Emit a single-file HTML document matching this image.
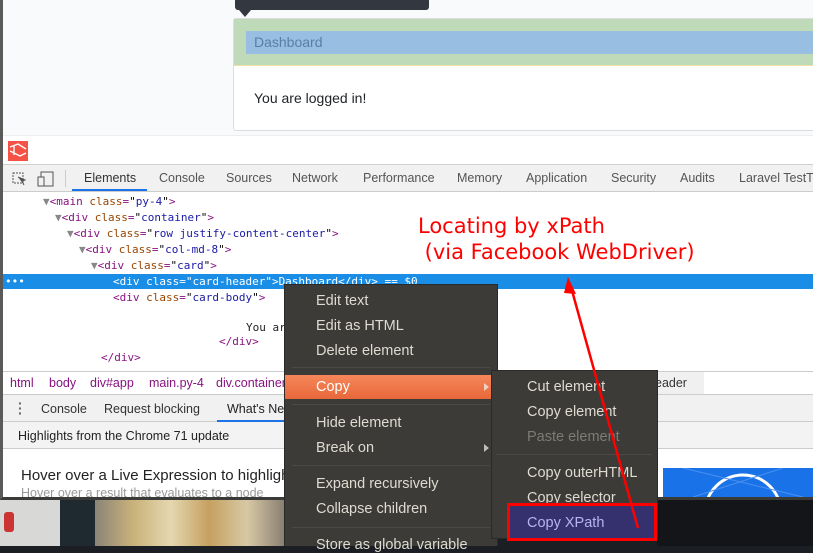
<!DOCTYPE html>
<html><head><meta charset="utf-8"><style>
*{margin:0;padding:0;box-sizing:border-box}
body{width:813px;height:546px;overflow:hidden;position:relative;background:#1b1f23;font-family:"Liberation Sans",sans-serif}
.a{position:absolute;white-space:nowrap}
.mono{font-family:"DejaVu Sans Mono","Liberation Mono",monospace;font-size:11px}
.tag{color:#881280}.at{color:#994500}.v{color:#1a1aa6}.g{color:#888}
.mi{position:absolute;color:#dfdbd2;font-size:14.5px;white-space:nowrap}
.sep{position:absolute;height:1px;background:#2e2d2a;border-bottom:1px solid #4a4945}
</style></head><body>
<div class="a" style="left:0;top:497px;width:60px;height:49px;background:#d8d8d6"></div>
<div class="a" style="left:4px;top:512px;width:10px;height:20px;background:#c33;border-radius:3px"></div>
<div class="a" style="left:60px;top:497px;width:35px;height:49px;background:#1f2a30"></div>
<div class="a" style="left:95px;top:497px;width:190px;height:49px;background:linear-gradient(90deg,#8a8478,#c9b27a 20%,#e4d7b0 40%,#c6a060 60%,#d7c9a5 80%,#887e70)"></div>
<div class="a" style="left:657px;top:497px;width:156px;height:49px;background:#131518"></div>
<div class="a" style="left:0;top:0;width:813px;height:500px;background:#fff;border-left:3px solid #5a5a58;border-bottom:3px solid #3a3a38"></div>
<div class="a" style="left:3px;top:0;width:810px;height:135px;background:#f8fafc"></div>
<div class="a" style="left:233px;top:18px;width:590px;height:113px;background:#fff;border:1px solid #dcdcdc;border-radius:3px"></div>
<div class="a" style="left:234px;top:19px;width:580px;height:47px;background:#bfdab8;border-bottom:1px solid #f0e0a8"></div>
<div class="a" style="left:246px;top:31px;width:567px;height:23px;background:#98bee2"></div>
<div class="a" style="left:254px;top:34px;font-size:14px;color:#5a7ea8">Dashboard</div>
<div class="a" style="left:254px;top:90px;font-size:14px;color:#212529">You are logged in!</div>
<div class="a" style="left:235px;top:0;width:194px;height:10px;background:#333740;border-radius:0 0 3px 3px"></div>
<div class="a" style="left:239px;top:10px;width:0;height:0;border-left:6px solid transparent;border-right:6px solid transparent;border-top:7px solid #333740"></div>
<div class="a" style="left:3px;top:135px;width:810px;height:30px;background:#fff;border-top:1px solid #eee;border-bottom:1px solid #d0d0d0"></div>
<div class="a" style="left:8px;top:141px;width:20px;height:20px;background:#f55247"></div>
<svg class="a" style="left:8px;top:141px" width="20" height="20"><path d="M2 6 L10 3 L18 8 M2 10 L12 15 L18 12 M6 4 L6 14" stroke="#fff" stroke-width="1.4" fill="none"/></svg>
<div class="a" style="left:3px;top:165px;width:810px;height:27px;background:#f1f1f1;border-bottom:1px solid #ccc"></div>
<svg class="a" style="left:12px;top:171px" width="45" height="16"><rect x="1" y="2" width="10" height="10" fill="none" stroke="#555" stroke-dasharray="2 1"/><path d="M6 6 L13 9 L10 10 L12 14" stroke="#555" fill="#555"/><rect x="29" y="1" width="12" height="14" fill="none" stroke="#555"/><rect x="26" y="6" width="6" height="9" fill="#f1f1f1" stroke="#555"/></svg>
<div class="a" style="left:65px;top:170px;width:1px;height:17px;background:#ccc"></div>
<div class="a" style="left:72px;top:189px;width:75px;height:2px;background:#1a73e8"></div>
<div class="a" style="top:171px;left:0;font-size:12.5px;color:#333;width:813px;height:16px">
<span class="a" style="left:84px">Elements</span><span class="a" style="left:159px;color:#555">Console</span><span class="a" style="left:226px;color:#555">Sources</span><span class="a" style="left:292px;color:#555">Network</span><span class="a" style="left:363px;color:#555">Performance</span><span class="a" style="left:457px;color:#555">Memory</span><span class="a" style="left:526px;color:#555">Application</span><span class="a" style="left:611px;color:#555">Security</span><span class="a" style="left:680px;color:#555">Audits</span><span class="a" style="left:739px;color:#555">Laravel TestTools</span></div>
<div class="a mono" style="left:43px;top:195px"><span class="g">▼</span><span class="tag">&lt;main</span> <span class="at">class</span><span class="tag">=</span>"<span class="v">py-4</span>"<span class="tag">&gt;</span></div>
<div class="a mono" style="left:55px;top:211px"><span class="g">▼</span><span class="tag">&lt;div</span> <span class="at">class</span><span class="tag">=</span>"<span class="v">container</span>"<span class="tag">&gt;</span></div>
<div class="a mono" style="left:67px;top:227px"><span class="g">▼</span><span class="tag">&lt;div</span> <span class="at">class</span><span class="tag">=</span>"<span class="v">row justify-content-center</span>"<span class="tag">&gt;</span></div>
<div class="a mono" style="left:79px;top:243px"><span class="g">▼</span><span class="tag">&lt;div</span> <span class="at">class</span><span class="tag">=</span>"<span class="v">col-md-8</span>"<span class="tag">&gt;</span></div>
<div class="a mono" style="left:91px;top:259px"><span class="g">▼</span><span class="tag">&lt;div</span> <span class="at">class</span><span class="tag">=</span>"<span class="v">card</span>"<span class="tag">&gt;</span></div>
<div class="a" style="left:3px;top:274px;width:810px;height:15px;background:#1a8ee6"></div>
<div class="a mono" style="left:5px;top:275px;color:#fff">•••</div>
<div class="a mono" style="left:113px;top:275px;color:#fff">&lt;div class="card-header"&gt;Dashboard&lt;/div&gt; == $0</div>
<div class="a mono" style="left:113px;top:291px"><span class="tag">&lt;div</span> <span class="at">class</span><span class="tag">=</span>"<span class="v">card-body</span>"<span class="tag">&gt;</span></div>
<div class="a mono" style="left:246px;top:321px;color:#222">You ar</div>
<div class="a mono" style="left:219px;top:335px" ><span class="tag">&lt;/div&gt;</span></div>
<div class="a mono" style="left:101px;top:351px"><span class="tag">&lt;/div&gt;</span></div>
<div class="a" style="left:3px;top:371px;width:810px;height:24px;background:#fff;border-top:1px solid #ccc;border-bottom:1px solid #ccc"></div>
<div class="a" style="left:640px;top:372px;width:64px;height:22px;background:#f0f0f0"></div>
<div class="a" style="top:376px;left:0;font-size:12.5px;color:#881280;width:813px;height:16px"><span class="a" style="left:10px">html</span><span class="a" style="left:49px">body</span><span class="a" style="left:90px">div#app</span><span class="a" style="left:149px">main.py-4</span><span class="a" style="left:216px">div.container</span><span class="a" style="left:655px;color:#333">eader</span></div>
<div class="a" style="left:3px;top:395px;width:810px;height:27px;background:#f1f1f1;border-bottom:1px solid #ccc"></div>
<div class="a" style="left:18px;top:401px;font-size:14px;color:#666;line-height:5px;font-weight:bold">·<br>·<br>·</div>
<div class="a" style="left:41px;top:402px;font-size:12.5px;color:#333">Console</div>
<div class="a" style="left:104px;top:402px;font-size:12.5px;color:#333">Request blocking</div>
<div class="a" style="left:227px;top:402px;font-size:12.5px;color:#222">What's New</div>
<div class="a" style="left:217px;top:420px;width:80px;height:2px;background:#1a73e8"></div>
<div class="a" style="left:3px;top:422px;width:810px;height:27px;background:#f3f3f3;border-bottom:1px solid #ccc"></div>
<div class="a" style="left:18px;top:429px;font-size:12.5px;color:#222">Highlights from the Chrome 71 update</div>
<div class="a" style="left:21px;top:467px;font-size:15px;color:#222">Hover over a Live Expression to highlight a DOM node</div>
<div class="a" style="left:21px;top:487px;font-size:12.5px;color:#999;height:10px;overflow:hidden;line-height:13px">Hover over a result that evaluates to a node</div>
<div class="a" style="left:663px;top:468px;width:150px;height:29px;background:#1a72e8;overflow:hidden"><svg width="150" height="29"><circle cx="80" cy="45" r="38" fill="none" stroke="#fff" stroke-width="3"/><path d="M20 0 L140 29 M30 29 L120 0" stroke="#4a90ef"/></svg></div>
<div class="a" style="left:418px;top:213px;font-family:'DejaVu Sans',sans-serif;font-size:21px;color:#f00;line-height:26px">Locating by xPath<br>&nbsp;(via Facebook WebDriver)</div>
<div class="a" style="left:284px;top:284px;width:214px;height:262px;background:#3c3b37;border:1px solid #2a2a28;border-bottom:none"></div>
<div class="mi" style="left:316px;top:293px">Edit text</div>
<div class="mi" style="left:316px;top:318px">Edit as HTML</div>
<div class="mi" style="left:316px;top:343px">Delete element</div>
<div class="sep" style="left:292px;top:367px;width:198px"></div>
<div class="a" style="left:285px;top:375px;width:210px;height:24px;background:linear-gradient(#f5875a,#e8683a)"></div>
<div class="mi" style="left:316px;top:379px;color:#fff">Copy</div>
<div class="a" style="left:484px;top:383px;border-left:5px solid #f0d0c0;border-top:4px solid transparent;border-bottom:4px solid transparent"></div>
<div class="sep" style="left:292px;top:404px;width:198px"></div>
<div class="mi" style="left:316px;top:415px">Hide element</div>
<div class="mi" style="left:316px;top:440px">Break on</div>
<div class="a" style="left:484px;top:444px;border-left:5px solid #bbb;border-top:4px solid transparent;border-bottom:4px solid transparent"></div>
<div class="sep" style="left:292px;top:465px;width:198px"></div>
<div class="mi" style="left:316px;top:476px">Expand recursively</div>
<div class="mi" style="left:316px;top:501px">Collapse children</div>
<div class="sep" style="left:292px;top:527px;width:198px"></div>
<div class="mi" style="left:316px;top:537px">Store as global variable</div>
<div class="a" style="left:491px;top:370px;width:167px;height:169px;background:#3c3b37;border:1px solid #2a2a28"></div>
<div class="mi" style="left:527px;top:379px">Cut element</div>
<div class="mi" style="left:527px;top:404px">Copy element</div>
<div class="mi" style="left:527px;top:429px;color:#7d7b75">Paste element</div>
<div class="sep" style="left:496px;top:454px;width:156px"></div>
<div class="mi" style="left:527px;top:465px">Copy outerHTML</div>
<div class="mi" style="left:527px;top:490px">Copy selector</div>
<div class="a" style="left:507px;top:503px;width:150px;height:38px;background:#35316f;border:3px solid #f00"></div>
<div class="mi" style="left:527px;top:515px;color:#b8b2f0">Copy XPath</div>
<svg class="a" style="left:0;top:0" width="813" height="546"><line x1="638" y1="528" x2="571" y2="287" stroke="#f00" stroke-width="2.5"/><path d="M568 277 L576 294 L564 293 Z" fill="#f00"/></svg>
</body></html>
